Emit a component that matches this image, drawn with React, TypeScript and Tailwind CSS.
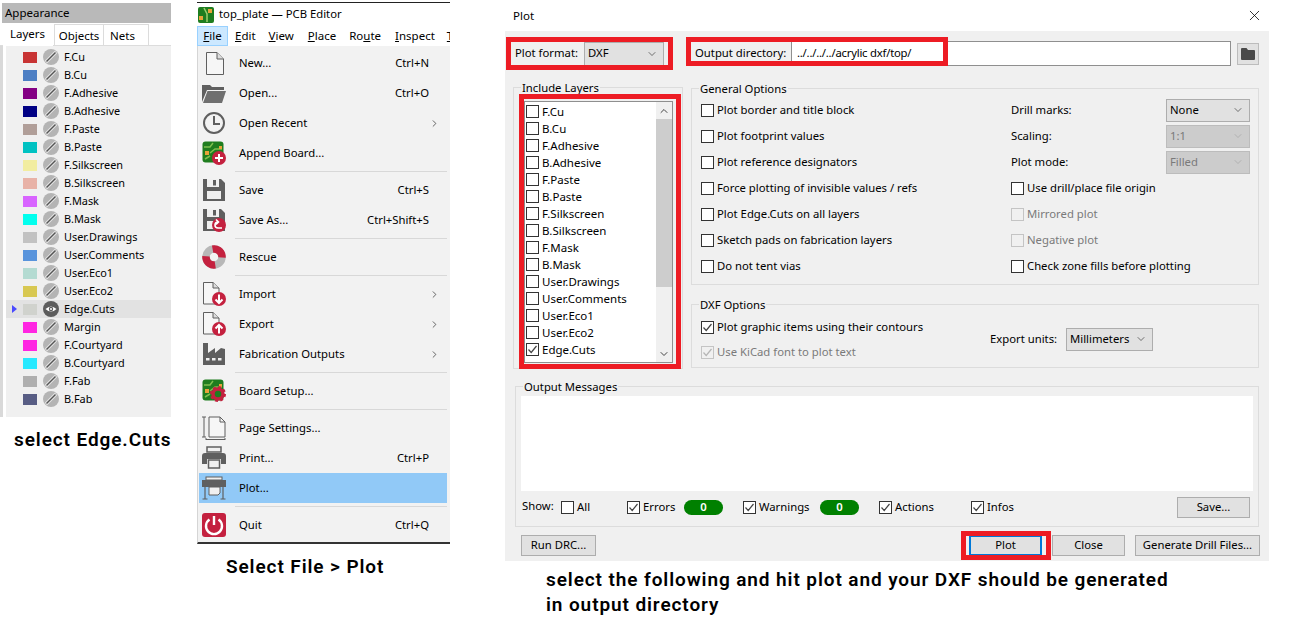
import { ChevronDown, ChevronRight, ChevronUp, X } from "lucide-react";
import type { ReactNode } from "react";

const uiFont = "font-['Noto_Sans',sans-serif] text-[11.3px] text-black";
const captionFont = "font-['Roboto',sans-serif] text-[19px] font-semibold text-black tracking-[0.9px] whitespace-nowrap";

const appearanceLayers = [
  { name: "F.Cu", color: "#c83434" },
  { name: "B.Cu", color: "#4d7fc4" },
  { name: "F.Adhesive", color: "#840084" },
  { name: "B.Adhesive", color: "#000084" },
  { name: "F.Paste", color: "#b09e98" },
  { name: "B.Paste", color: "#00c2c2" },
  { name: "F.Silkscreen", color: "#f2eda1" },
  { name: "B.Silkscreen", color: "#e8b2a7" },
  { name: "F.Mask", color: "#d864ff" },
  { name: "B.Mask", color: "#02ffee" },
  { name: "User.Drawings", color: "#c2c2c2" },
  { name: "User.Comments", color: "#5994dc" },
  { name: "User.Eco1", color: "#b4dbd2" },
  { name: "User.Eco2", color: "#d8c852" },
  { name: "Edge.Cuts", color: "#d0d2cd" },
  { name: "Margin", color: "#ff26e2" },
  { name: "F.Courtyard", color: "#ff26e2" },
  { name: "B.Courtyard", color: "#26e9ff" },
  { name: "F.Fab", color: "#afafaf" },
  { name: "B.Fab", color: "#585d84" },
];

const plotLayers = [
  "F.Cu", "B.Cu", "F.Adhesive", "B.Adhesive", "F.Paste", "B.Paste", "F.Silkscreen", "B.Silkscreen",
  "F.Mask", "B.Mask", "User.Drawings", "User.Comments", "User.Eco1", "User.Eco2", "Edge.Cuts",
];

// icons
function EyeOff() {
  return (
    <svg width="16" height="16" viewBox="0 0 16 16">
      <circle cx="8" cy="8" r="8" fill="#b4b4b4" />
      <path d="M3 13 13 3" stroke="#e8e8e8" strokeWidth="3.2" />
      <path d="M3.5 12.5 12.5 3.5" stroke="#555" strokeWidth="1.5" />
    </svg>
  );
}

function EyeOn() {
  return (
    <svg width="16" height="16" viewBox="0 0 16 16">
      <circle cx="8" cy="8" r="8" fill="#5c5c5c" />
      <path d="M2.5 8Q8 3 13.5 8 8 13 2.5 8Z" fill="#fff" />
      <circle cx="8" cy="8" r="2.2" fill="#5c5c5c" />
      <circle cx="8" cy="8" r="1" fill="#fff" />
    </svg>
  );
}

function Board({ children }: { children?: ReactNode }) {
  return (
    <svg width="24" height="24" viewBox="0 0 24 24">
      <rect x="0.5" y="0.5" width="21" height="21" rx="3" fill="#1f7d1f" />
      <path d="M2 6 8 6 11 2M8 12 13 8 20 8M3 18 8 15" stroke="#7fbf4f" strokeWidth="1.5" fill="none" />
      <rect x="3" y="10" width="4" height="4" fill="#e8a33a" />
      <rect x="17" y="5" width="3" height="3" fill="#e8a33a" />
      {children}
    </svg>
  );
}

const floppy = (
  <>
    <path d="M1 1H19L23 5V23H1Z" fill="#5f5f5f" />
    <rect x="5" y="1" width="12" height="8" fill="#f0f0f0" />
    <rect x="11" y="2" width="3" height="5.5" fill="#5f5f5f" />
    <rect x="5" y="13" width="14" height="8" fill="#f0f0f0" />
  </>
);

const menuIcons: Record<string, ReactNode> = {
  doc: (
    <svg width="24" height="24" viewBox="0 0 24 24">
      <path d="M4.5 1.5H15L21.5 8V23.5H4.5Z" fill="#f6f6f6" stroke="#5f5f5f" strokeWidth="1" />
      <path d="M15 1.5V8H21.5" fill="#ddd" stroke="#5f5f5f" strokeWidth="1" />
    </svg>
  ),
  folder: (
    <svg width="24" height="24" viewBox="0 0 24 24">
      <path d="M0 4H8L10 6H22V9H5L0 21Z" fill="#5f5f5f" />
      <path d="M5.5 10H24L20 22H1Z" fill="#6f6f6f" />
    </svg>
  ),
  clock: (
    <svg width="24" height="24" viewBox="0 0 24 24">
      <circle cx="12" cy="12" r="10" fill="none" stroke="#5f5f5f" strokeWidth="2" />
      <path d="M12 5V13H18" fill="none" stroke="#5f5f5f" strokeWidth="2" />
    </svg>
  ),
  append: (
    <Board>
      <circle cx="17" cy="17" r="7" fill="#c4213f" />
      <path d="M17 13V21M13 17H21" stroke="#fff" strokeWidth="2" />
    </Board>
  ),
  save: (
    <svg width="24" height="24" viewBox="0 0 24 24">{floppy}</svg>
  ),
  saveAs: (
    <svg width="24" height="24" viewBox="0 0 24 24">
      {floppy}
      <circle cx="17" cy="17" r="7" fill="#c4213f" />
      <path d="M20 20H16A3 3 0 0 1 16 14M14 11.5 16.5 14 14 16.5" fill="none" stroke="#fff" strokeWidth="1.6" />
    </svg>
  ),
  rescue: (
    <svg width="24" height="24" viewBox="0 0 24 24">
      <circle cx="12" cy="12" r="8" fill="none" stroke="#b8b8b8" strokeWidth="7.5" />
      <circle cx="12" cy="12" r="8" fill="none" stroke="#c4213f" strokeWidth="7.5" strokeDasharray="14.5 10.63" transform="rotate(-100 12 12)" />
    </svg>
  ),
  import: (
    <svg width="24" height="24" viewBox="0 0 24 24">
      <path d="M1.5 0.5H11L17 6V22H1.5Z" fill="#f6f6f6" stroke="#5f5f5f" strokeWidth="1" />
      <path d="M11 0.5V6H17" fill="#ddd" stroke="#5f5f5f" strokeWidth="1" />
      <circle cx="17" cy="17" r="7" fill="#c4213f" />
      <path d="M17 12.5V21M13.5 17.5 17 21 20.5 17.5" fill="none" stroke="#fff" strokeWidth="2" />
    </svg>
  ),
  export: (
    <svg width="24" height="24" viewBox="0 0 24 24">
      <path d="M1.5 0.5H11L17 6V22H1.5Z" fill="#f6f6f6" stroke="#5f5f5f" strokeWidth="1" />
      <path d="M11 0.5V6H17" fill="#ddd" stroke="#5f5f5f" strokeWidth="1" />
      <circle cx="17" cy="17" r="7" fill="#c4213f" />
      <path d="M17 21.5V13M13.5 16.5 17 13 20.5 16.5" fill="none" stroke="#fff" strokeWidth="2" />
    </svg>
  ),
  factory: (
    <svg width="24" height="24" viewBox="0 0 24 24">
      <path d="M1 1H6V11L13 6V11L19 6 23 7V23H1Z" fill="#5f5f5f" />
      <rect x="4" y="16" width="3.5" height="2.5" fill="#f0f0f0" />
      <rect x="10" y="16" width="3.5" height="2.5" fill="#f0f0f0" />
      <rect x="16" y="16" width="3.5" height="2.5" fill="#f0f0f0" />
    </svg>
  ),
  setup: (
    <Board>
      <circle cx="16" cy="15" r="5" fill="none" stroke="#c4213f" strokeWidth="3.5" />
      <circle cx="16" cy="15" r="7" fill="none" stroke="#c4213f" strokeWidth="2" strokeDasharray="3 2.5" />
    </Board>
  ),
  page: (
    <svg width="24" height="24" viewBox="0 0 24 24">
      <path d="M7 1H18L23 6V21H7Z" fill="#f6f6f6" stroke="#5f5f5f" strokeWidth="1" />
      <path d="M18 1V6H23" fill="none" stroke="#5f5f5f" strokeWidth="1" />
      <path d="M2 1V21M0 1H4M0 21H4M4 23.5H23M4 22V24M23 22V24" stroke="#5f5f5f" strokeWidth="1" fill="none" />
    </svg>
  ),
  print: (
    <svg width="24" height="24" viewBox="0 0 24 24">
      <path d="M5 1H19V6H5Z" fill="#f0f0f0" stroke="#5f5f5f" strokeWidth="1.5" />
      <path d="M3 7H21A3 3 0 0 1 24 10V18H19V13H5V18H0V10A3 3 0 0 1 3 7Z" fill="#5f5f5f" />
      <path d="M6.5 14H17.5V22H6.5Z" fill="#f0f0f0" stroke="#5f5f5f" strokeWidth="1.5" />
    </svg>
  ),
  plot: (
    <svg width="24" height="24" viewBox="0 0 24 24">
      <rect x="4" y="1" width="16" height="3" fill="#f0f0f0" stroke="#5f5f5f" />
      <rect x="0" y="4" width="24" height="7" fill="#5f5f5f" />
      <path d="M7 11V19H16L18 17V11Z" fill="#f0f0f0" stroke="#5f5f5f" />
      <path d="M3 11V23M21 11V23M0.5 23H5.5M18.5 23H23.5" stroke="#5f5f5f" strokeWidth="1.2" />
    </svg>
  ),
  quit: (
    <svg width="24" height="24" viewBox="0 0 24 24">
      <rect width="24" height="24" rx="3" fill="#c4213f" />
      <path d="M7.5 6.5A8 8 0 1 0 16.5 6.5" fill="none" stroke="#fff" strokeWidth="2.4" />
      <path d="M12 3V12" stroke="#fff" strokeWidth="2.4" />
    </svg>
  ),
};

const menuItems = [
  { label: "New...", icon: "doc", shortcut: "Ctrl+N" },
  { label: "Open...", icon: "folder", shortcut: "Ctrl+O" },
  { label: "Open Recent", icon: "clock", sub: true },
  { label: "Append Board...", icon: "append" },
  { sep: true },
  { label: "Save", icon: "save", shortcut: "Ctrl+S" },
  { label: "Save As...", icon: "saveAs", shortcut: "Ctrl+Shift+S" },
  { sep: true },
  { label: "Rescue", icon: "rescue" },
  { sep: true },
  { label: "Import", icon: "import", sub: true },
  { label: "Export", icon: "export", sub: true },
  { label: "Fabrication Outputs", icon: "factory", sub: true },
  { sep: true },
  { label: "Board Setup...", icon: "setup" },
  { sep: true },
  { label: "Page Settings...", icon: "page" },
  { label: "Print...", icon: "print", shortcut: "Ctrl+P" },
  { label: "Plot...", icon: "plot", active: true },
  { sep: true },
  { label: "Quit", icon: "quit", shortcut: "Ctrl+Q" },
];

function AppearancePanel() {
  return (
    <div className="w-[171px]">
      <div className="ml-[2px] mt-[3px] h-[20px] bg-[#b9b9b9] pl-[3px] text-[11.5px] leading-[20px]">Appearance</div>
      <div className="mt-px flex h-[22px] border-b border-[#dcdcdc] pl-[3px] text-[11.5px]">
        <div className="h-[22px] w-[50px] bg-white pl-[7px] leading-[20px]">Layers</div>
        <div className="ml-px h-[21px] w-[50px] border border-b-0 border-[#dcdcdc] text-center leading-[22px]">Objects</div>
        <div className="h-[21px] w-[45px] border border-b-0 border-l-0 border-[#dcdcdc] pl-[6px] leading-[22px]">Nets</div>
      </div>
      <div className="flex">
        <div className="h-[371px] w-[3px] bg-[#d9d9d9]" />
        <div className="ml-[3px] h-[371px] w-[165px] bg-[#f0f0f0] pt-[2px] text-[10.9px]">
          {appearanceLayers.map((l) => {
            const selected = l.name === "Edge.Cuts";
            return (
              <div key={l.name} className={`flex h-[18px] items-center ${selected ? "bg-[#e2e2e2]" : ""}`}>
                <div className="w-[17px] pl-[6px]">
                  {selected && <div className="h-0 w-0 border-y-[4.5px] border-l-[5px] border-y-transparent border-l-[#4a4aff]" />}
                </div>
                <div className="h-[11px] w-[14px]" style={{ backgroundColor: l.color }} />
                <div className="ml-[6px] flex h-[16px] w-[16px]">{selected ? <EyeOn /> : <EyeOff />}</div>
                <span className="ml-[5px]">{l.name}</span>
              </div>
            );
          })}
        </div>
      </div>
      <div className={`${captionFont} mt-[11px] pl-[14px] leading-[24px]`}>select Edge.Cuts</div>
    </div>
  );
}

function FileMenu() {
  return (
    <div className="w-[253px]">
      <div className="mt-[2px] flex h-[24px] items-center border-t border-[#222] pl-px">
        <svg width="16" height="16" viewBox="0 0 16 16">
          <rect width="16" height="16" rx="2" fill="#1f7d1f" />
          <rect x="1" y="9" width="4" height="4" fill="#e8a33a" />
          <rect x="10" y="2" width="4" height="4" fill="#e8a33a" />
          <path d="M6 1 9 7V15" stroke="#9ccf6f" strokeWidth="1.5" fill="none" />
        </svg>
        <span className="ml-[5px]">top_plate — PCB Editor</span>
      </div>
      <div className="flex h-[20px] items-center overflow-hidden whitespace-nowrap text-[11.5px]">
        <div className="h-[20px] w-[31px] shrink-0 border border-[#99d1ff] bg-[#cce8ff] text-center leading-[18px]"><u>F</u>ile</div>
        <span className="ml-[7px]"><u>E</u>dit</span>
        <span className="ml-[13px]"><u>V</u>iew</span>
        <span className="ml-[14px]"><u>P</u>lace</span>
        <span className="ml-[13px]">Ro<u>u</u>te</span>
        <span className="ml-[14px]"><u>I</u>nspect</span>
        <span className="ml-[12px]"><u>T</u></span>
      </div>
      <div className="h-[498px] border-b-2 border-l border-b-[#333] border-l-[#d5d5d5] bg-[#f2f2f2] pt-[2px]">
        {menuItems.map((item, i) =>
          item.sep ? (
            <div key={i} className="flex h-[7px] items-center pl-[37px] pr-[3px]">
              <div className="h-px w-full bg-[#d8d8d8]" />
            </div>
          ) : (
            <div key={i} className={`ml-px mr-[3px] flex h-[30px] items-center ${item.active ? "bg-[#91c9f7]" : ""}`}>
              <div className="ml-[3px] h-[24px] w-[24px]">{menuIcons[item.icon!]}</div>
              <span className="ml-[13px]">{item.label}</span>
              {item.shortcut && <span className="ml-auto mr-[18px]">{item.shortcut}</span>}
              {item.sub && <ChevronRight size={11} strokeWidth={1.6} className="ml-auto mr-[7px] text-[#333]" />}
            </div>
          )
        )}
      </div>
      <div className={`${captionFont} mt-[11px] pl-[29px] leading-[24px]`}>Select File &gt; Plot</div>
    </div>
  );
}

function Check({ on, off }: { on?: boolean; off?: boolean }) {
  return (
    <div className={`flex h-[13px] w-[13px] shrink-0 items-center justify-center border ${off ? "border-[#c4c4c4] bg-[#f0f0f0]" : "border-[#333] bg-white"}`}>
      {on && (
        <svg width="11" height="11" viewBox="0 0 11 11">
          <path d="M1.5 5.5 4.2 8.5 9.5 2" fill="none" stroke={off ? "#b5b5b5" : "#444"} strokeWidth="1.2" />
        </svg>
      )}
    </div>
  );
}

function CheckRow({ label, on, off }: { label: string; on?: boolean; off?: boolean }) {
  return (
    <div className="flex h-[26px] items-center gap-[3px]">
      <Check on={on} off={off} />
      <span className={off ? "text-[#7a7a7a]" : ""}>{label}</span>
    </div>
  );
}

function Dropdown({ value, w, off, mlAuto }: { value: string; w: string; off?: boolean; mlAuto?: boolean }) {
  return (
    <div className={`flex h-[23px] items-center border px-[3px] ${w} ${mlAuto ? "ml-auto" : ""} ${off ? "border-[#bcbcbc] bg-[#cccccc] text-[#7a7a7a]" : "border-[#adadad] bg-[#e1e1e1]"}`}>
      <span>{value}</span>
      <ChevronDown size={12} strokeWidth={1.2} className={`ml-auto mr-[2px] ${off ? "text-[#a0a0a0]" : "text-[#222]"}`} />
    </div>
  );
}

function Group({ title, className, children }: { title: string; className: string; children: ReactNode }) {
  return (
    <div className={`relative border border-[#dcdcdc] ${className}`}>
      <span className="absolute left-[7px] top-[-7px] bg-[#f0f0f0] px-px leading-[14px]">{title}</span>
      {children}
    </div>
  );
}

function Btn({ label, w, className }: { label: string; w: string; className?: string }) {
  return (
    <div className={`flex h-[21px] items-center justify-center border bg-[#e1e1e1] ${w} ${className ?? "border-[#adadad]"}`}>{label}</div>
  );
}

function Pill() {
  return (
    <div className="flex h-[15px] w-[39px] items-center justify-center rounded-full bg-[#008000] font-semibold text-white">0</div>
  );
}

function PlotDialog() {
  return (
    <div className="w-[765px]">
      <div className="relative w-[765px]">
        <div className="flex h-[31px] items-center bg-white pl-[9px] text-[11.5px]">
          Plot
          <X size={17} strokeWidth={1.1} className="ml-auto mr-[6px] text-black" />
        </div>
        <div className="ml-px h-[530px] w-[764px] bg-[#f0f0f0]">
          {/* format and output row */}
          <div className="flex items-center pl-[10px] pt-[10px]">
            <span className="w-[69px]">Plot format:</span>
            <div className="flex h-[24px] w-[80px] items-center border border-[#adadad] bg-[#e1e1e1] px-[3px]">
              DXF
              <ChevronDown size={12} strokeWidth={1.2} className="ml-auto mr-[2px] text-[#222]" />
            </div>
            <span className="ml-[31px] w-[96px]">Output directory:</span>
            <div className="flex h-[25px] w-[440px] items-center border border-[#8f8f8f] bg-white pl-[5px] text-[11.3px] tracking-[-0.22px]">../../../../acrylic dxf/top/</div>
            <div className="ml-[6px] flex h-[22px] w-[22px] items-center justify-center border border-[#bcbcbc] bg-[#e1e1e1]">
              <svg width="14" height="12" viewBox="0 0 14 12">
                <path d="M1 0H5.5L7 2H13A1 1 0 0 1 14 3V11A1 1 0 0 1 13 12H1A1 1 0 0 1 0 11V1A1 1 0 0 1 1 0Z" fill="#4a4a4a" />
              </svg>
            </div>
          </div>

          <div className="mt-[21px] flex pl-[8px]">
            <Group title="Include Layers" className="h-[282px] w-[170px] pl-[10px] pt-[13px]">
              <div className="flex h-[262px] w-[149px] border border-[#8f8f8f] bg-white text-[11.5px]">
                <div className="flex-1 pt-px">
                  {plotLayers.map((l) => (
                    <div key={l} className="flex h-[17px] items-center gap-[3px] pl-px">
                      <Check on={l === "Edge.Cuts"} />
                      <span>{l}</span>
                    </div>
                  ))}
                </div>
                <div className="flex w-[16px] flex-col bg-[#f0f0f0]">
                  <div className="flex h-[17px] items-center justify-center">
                    <ChevronUp size={12} strokeWidth={2} className="text-[#444]" />
                  </div>
                  <div className="h-[168px] bg-[#cdcdcd]" />
                  <div className="mt-auto flex h-[17px] items-center justify-center">
                    <ChevronDown size={12} strokeWidth={2} className="text-[#444]" />
                  </div>
                </div>
              </div>
            </Group>

            <div className="ml-[8px] w-[568px] pt-px">
              <Group title="General Options" className="h-[197px] pl-[9px] pt-[8px]">
                <div className="flex">
                  <div className="w-[310px]">
                    <CheckRow label="Plot border and title block" />
                    <CheckRow label="Plot footprint values" />
                    <CheckRow label="Plot reference designators" />
                    <CheckRow label="Force plotting of invisible values / refs" />
                    <CheckRow label="Plot Edge.Cuts on all layers" />
                    <CheckRow label="Sketch pads on fabrication layers" />
                    <CheckRow label="Do not tent vias" />
                  </div>
                  <div className="w-[239px]">
                    <div className="flex h-[26px] items-center">Drill marks:<Dropdown value="None" w="w-[84px]" mlAuto /></div>
                    <div className="flex h-[26px] items-center">Scaling:<Dropdown value="1:1" w="w-[84px]" off mlAuto /></div>
                    <div className="flex h-[26px] items-center">Plot mode:<Dropdown value="Filled" w="w-[84px]" off mlAuto /></div>
                    <CheckRow label="Use drill/place file origin" />
                    <CheckRow label="Mirrored plot" off />
                    <CheckRow label="Negative plot" off />
                    <CheckRow label="Check zone fills before plotting" />
                  </div>
                </div>
              </Group>
              <Group title="DXF Options" className="mt-[19px] flex h-[64px] pl-[9px] pt-[9px]">
                <div className="w-[289px]">
                  <div className="flex h-[26px] items-center gap-[3px]"><Check on />Plot graphic items using their contours</div>
                  <div className="flex h-[25px] items-center gap-[3px]"><Check on off /><span className="text-[#7a7a7a]">Use KiCad font to plot text</span></div>
                </div>
                <div className="flex h-[46px] items-center pt-[4px]">
                  <span className="w-[76px]">Export units:</span>
                  <Dropdown value="Millimeters" w="w-[87px]" />
                </div>
              </Group>
            </div>
          </div>

          <Group title="Output Messages" className="ml-[10px] mt-[17px] h-[141px] w-[744px] px-[5px] pt-[9px]">
            <div className="h-[95px] w-[732px] bg-white" />
            <div className="mt-[6px] flex h-[21px] items-center pl-px">
              <span className="w-[39px] -translate-y-px">Show:</span>
              <div className="flex w-[66px] items-center gap-[3px]"><Check />All</div>
              <div className="flex w-[57px] items-center gap-[3px]"><Check on />Errors</div>
              <Pill />
              <div className="ml-[20px] flex w-[77px] items-center gap-[3px]"><Check on />Warnings</div>
              <Pill />
              <div className="ml-[20px] flex w-[92px] items-center gap-[3px]"><Check on />Actions</div>
              <div className="flex items-center gap-[3px]"><Check on />Infos</div>
              <Btn label="Save..." w="w-[73px]" className="ml-auto mr-[3px] border-[#adadad]" />
            </div>
          </Group>

          <div className="mt-[8px] flex pl-[16px] pr-[9px]">
            <Btn label="Run DRC..." w="w-[75px]" />
            <Btn label="Plot" w="w-[73px]" className="ml-auto border-2 border-[#0078d7]" />
            <Btn label="Close" w="w-[73px]" className="ml-[10px] border-[#adadad]" />
            <Btn label="Generate Drill Files..." w="w-[125px]" className="ml-[10px] border-[#adadad]" />
          </div>
        </div>

        {/* red annotation frames */}
        <div className="absolute left-[2px] top-[37px] h-[33px] w-[167px] border-[5px] border-[#ed1c24]" />
        <div className="absolute left-[182px] top-[37px] h-[29px] w-[262px] border-[5px] border-[#ed1c24]" />
        <div className="absolute left-[15px] top-[94px] h-[275px] w-[162px] border-[5px] border-[#ed1c24]" />
        <div className="absolute left-[457px] top-[531px] h-[29px] w-[90px] border-[5px] border-[#ed1c24]" />
      </div>
      <div className={`${captionFont} ml-[42px] mt-[6px] leading-[25px]`}>
        select the following and hit plot and your DXF should be generated
        <br />
        in output directory
      </div>
    </div>
  );
}

export default function App() {
  return (
    <div className={`relative h-[629px] w-[1313px] overflow-hidden bg-white ${uiFont}`}>
      <div className="absolute left-0 top-0"><AppearancePanel /></div>
      <div className="absolute left-[197px] top-0"><FileMenu /></div>
      <div className="absolute left-[504px] top-0"><PlotDialog /></div>
    </div>
  );
}
